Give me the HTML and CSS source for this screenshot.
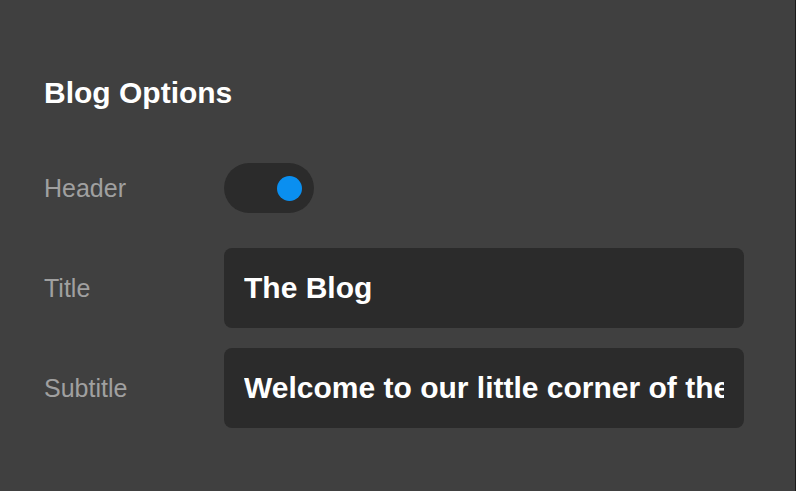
FILE: index.html
```html
<!DOCTYPE html>
<html lang="en">
<head>
<meta charset="utf-8">
<title>Blog Options</title>
<link rel="stylesheet" href="styles.css">
</head>
<body>
<div class="page">
  <h1 class="heading">Blog Options</h1>
  <div class="form">
    <div class="row">
      <label class="label">Header</label>
      <div class="toggle on"><span class="knob"></span></div>
    </div>
    <div class="row">
      <label class="label" for="title">Title</label>
      <input class="field" id="title" type="text" value="The Blog">
    </div>
    <div class="row">
      <label class="label" for="subtitle">Subtitle</label>
      <input class="field" id="subtitle" type="text" value="Welcome to our little corner of the internet">
    </div>
  </div>
</div>
</body>
</html>
```
FILE: styles.css
```css
html, body {
  margin: 0;
  padding: 0;
  background: #404040;
}
.page {
  box-sizing: border-box;
  width: 796px;
  height: 491px;
  padding: 75px 0 0 44px;
  border-right: 1px solid #1c1c1c;
  font-family: "Liberation Sans", Arial, sans-serif;
}
.heading {
  margin: 0;
  font-size: 30px;
  line-height: 36px;
  font-weight: bold;
  color: #ffffff;
}
.form {
  margin-top: 37px;
  display: flex;
  flex-direction: column;
  gap: 20px;
}
.row {
  display: grid;
  grid-template-columns: 180px 520px;
  align-items: center;
  height: 80px;
}
.label {
  font-size: 25px;
  color: #a0a0a0;
}
.toggle {
  box-sizing: border-box;
  width: 90px;
  height: 50px;
  border-radius: 25px;
  background: #2b2b2b;
  display: flex;
  align-items: center;
  justify-content: flex-end;
  padding: 0 12px;
}
.knob {
  width: 25px;
  height: 25px;
  border-radius: 50%;
  background: #0a8ff0;
}
.field {
  box-sizing: border-box;
  width: 520px;
  height: 80px;
  border: none;
  outline: none;
  border-radius: 8px;
  background: #2b2b2b;
  padding: 0 20px;
  margin: 0;
  font-family: "Liberation Sans", Arial, sans-serif;
  font-size: 30px;
  font-weight: bold;
  color: #ffffff;
}
```
